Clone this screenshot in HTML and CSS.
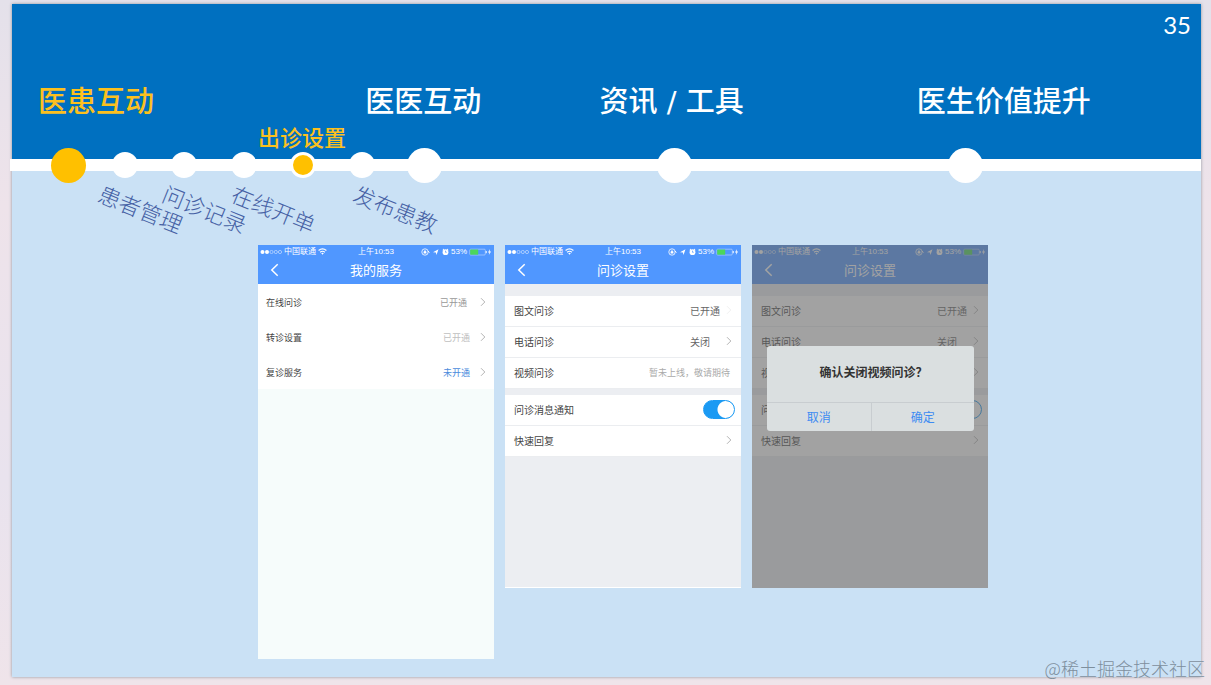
FILE: index.html
```html
<!DOCTYPE html>
<html lang="zh-CN">
<head>
<meta charset="utf-8">
<title>医患互动 - 出诊设置</title>
<link rel="stylesheet" href="styles.css">
</head>
<body>
<svg class="symbols" aria-hidden="true">
  <symbol id="signal" viewBox="0 0 22 6">
    <circle cx="2.5" cy="3" r="2" fill="currentColor"/><circle cx="7" cy="3" r="2" fill="currentColor"/>
    <g fill="none" stroke="currentColor" stroke-width=".6" opacity=".8"><circle cx="11.5" cy="3" r="1.6"/><circle cx="15.8" cy="3" r="1.6"/><circle cx="20" cy="3" r="1.6"/></g>
  </symbol>
  <symbol id="wifi" viewBox="0 0 9 7">
    <g fill="none" stroke="currentColor" stroke-width="1.2"><path d="M.6 2.5Q4.5-.7 8.4 2.5"/><path d="M2.1 4.2Q4.5 2.3 6.9 4.2"/></g><path d="M3.2 5.3Q4.5 4.4 5.8 5.3L4.5 6.7z" fill="currentColor"/>
  </symbol>
  <symbol id="indicators" viewBox="0 0 28 8">
    <circle cx="4" cy="4" r="3.2" fill="none" stroke="currentColor" stroke-width=".8"/><path d="M2.6 3.6h2.8v2H2.6zM3.2 3.5V2.4h1.6v1.1" fill="currentColor"/><path d="M7 3l1.4 1.6" stroke="currentColor"/>
    <path d="M12 4.3L17.5 1.3 15.5 7 14.9 4.6z" fill="currentColor"/>
    <circle cx="24.5" cy="4.2" r="2.9" fill="currentColor"/><path d="M21.7 2l1.3-1M27.3 2l-1.3-1" stroke="currentColor"/><path class="hand" d="M24.5 2.7v1.6h1.2" fill="none" stroke-width=".7"/>
  </symbol>
  <symbol id="battery" viewBox="0 0 23 8">
    <rect x=".8" y="1.2" width="15.5" height="5.8" rx="1" fill="none" stroke="currentColor" stroke-width=".5" opacity=".8"/><rect x="1.2" y="1.5" width="8" height="5.2" fill="#4cd65c"/><path d="M17.2 3v2.2" stroke="currentColor"/><path d="M21 1l-2 3.5h1.4L19.8 7l2.3-3.4h-1.5z" fill="currentColor"/>
  </symbol>
  <symbol id="back" viewBox="0 0 9 14"><path d="M7.7 1.3L1.8 7l5.9 5.7" fill="none" stroke="currentColor" stroke-width="1.5"/></symbol>
  <symbol id="chevron" viewBox="0 0 6 10"><path d="M1 1.2L4.8 5 1 8.8" fill="none" stroke="currentColor" stroke-width=".9"/></symbol>
</svg>

<main class="slide">
  <header class="banner">
    <p class="page-number">35</p>
    <nav class="sections">
      <a class="section current" href="#">医患互动</a>
      <a class="section" href="#">医医互动</a>
      <a class="section" href="#">资讯 / 工具</a>
      <a class="section" href="#">医生价值提升</a>
    </nav>
    <p class="step-current">出诊设置</p>
  </header>

  <div class="track">
    <span class="dot major done"></span>
    <span class="dot"></span>
    <span class="dot"></span>
    <span class="dot"></span>
    <span class="dot active"></span>
    <span class="dot"></span>
    <span class="dot major"></span>
    <span class="dot major"></span>
    <span class="dot major"></span>
  </div>
  <div class="steps">
    <span class="step">患者管理</span>
    <span class="step">问诊记录</span>
    <span class="step">在线开单</span>
    <span class="step">发布患教</span>
  </div>

  <div class="phones">
    <section class="phone services">
      <header class="phone-head">
        <div class="status">
          <span class="carrier"><svg class="i-signal"><use href="#signal"/></svg>中国联通<svg class="i-wifi"><use href="#wifi"/></svg></span>
          <span>上午10:53</span>
          <span class="power"><svg class="i-indicators"><use href="#indicators"/></svg>53%<svg class="i-battery"><use href="#battery"/></svg></span>
        </div>
        <div class="navbar">
          <button class="back" aria-label="返回"><svg><use href="#back"/></svg></button>
          <h2>我的服务</h2>
        </div>
      </header>
      <div class="group">
        <a class="row" href="#">在线问诊<span class="value">已开通</span><svg class="chevron"><use href="#chevron"/></svg></a>
        <a class="row" href="#">转诊设置<span class="value faint">已开通</span><svg class="chevron"><use href="#chevron"/></svg></a>
        <a class="row" href="#">复诊服务<span class="value link">未开通</span><svg class="chevron"><use href="#chevron"/></svg></a>
      </div>
    </section>

    <section class="phone settings">
      <header class="phone-head">
        <div class="status">
          <span class="carrier"><svg class="i-signal"><use href="#signal"/></svg>中国联通<svg class="i-wifi"><use href="#wifi"/></svg></span>
          <span>上午10:53</span>
          <span class="power"><svg class="i-indicators"><use href="#indicators"/></svg>53%<svg class="i-battery"><use href="#battery"/></svg></span>
        </div>
        <div class="navbar">
          <button class="back" aria-label="返回"><svg><use href="#back"/></svg></button>
          <h2>问诊设置</h2>
        </div>
      </header>
      <div class="group">
        <a class="row" href="#">图文问诊<span class="value dark">已开通</span><svg class="chevron pale"><use href="#chevron"/></svg></a>
        <a class="row" href="#">电话问诊<span class="value dark apart">关闭</span><svg class="chevron"><use href="#chevron"/></svg></a>
        <div class="row">视频问诊<span class="value note">暂未上线，敬请期待</span></div>
      </div>
      <div class="group">
        <label class="row" for="notify">问诊消息通知<input class="switch" id="notify" type="checkbox" checked></label>
        <a class="row" href="#">快速回复<svg class="chevron solo"><use href="#chevron"/></svg></a>
      </div>
    </section>

    <section class="phone settings dimmed">
      <header class="phone-head">
        <div class="status">
          <span class="carrier"><svg class="i-signal"><use href="#signal"/></svg>中国联通<svg class="i-wifi"><use href="#wifi"/></svg></span>
          <span>上午10:53</span>
          <span class="power"><svg class="i-indicators"><use href="#indicators"/></svg>53%<svg class="i-battery"><use href="#battery"/></svg></span>
        </div>
        <div class="navbar">
          <button class="back" aria-label="返回"><svg><use href="#back"/></svg></button>
          <h2>问诊设置</h2>
        </div>
      </header>
      <div class="group">
        <a class="row" href="#">图文问诊<span class="value dark">已开通</span><svg class="chevron"><use href="#chevron"/></svg></a>
        <a class="row" href="#">电话问诊<span class="value dark apart">关闭</span><svg class="chevron"><use href="#chevron"/></svg></a>
        <a class="row" href="#">视频问诊<svg class="chevron solo"><use href="#chevron"/></svg></a>
      </div>
      <div class="group">
        <label class="row" for="notify-2">问诊消息通知<input class="switch" id="notify-2" type="checkbox"></label>
        <a class="row" href="#">快速回复<svg class="chevron solo"><use href="#chevron"/></svg></a>
      </div>
      <div class="overlay">
        <div class="dialog" role="dialog" aria-labelledby="confirm-title">
          <h3 id="confirm-title">确认关闭视频问诊？</h3>
          <div class="actions">
            <button>取消</button>
            <button>确定</button>
          </div>
        </div>
      </div>
    </section>
  </div>
</main>
<p class="credit">@稀土掘金技术社区</p>
</body>
</html>
```
FILE: styles.css
```css
* { box-sizing: border-box; }

body {
  margin: 0;
  min-height: 100vh;
  padding: 4px 10px 8px 12px;
  background: linear-gradient(#e4e1ea, #eee3ea 30%, #e9e3ee 70%, #efe4ea);
  font-family: "Noto Sans CJK SC", "Noto Sans", sans-serif;
  display: flex;
  position: relative;
}

h2, h3, p { margin: 0; font-weight: 400; }
a { color: inherit; text-decoration: none; }
button { border: 0; background: none; padding: 0; font: inherit; color: inherit; }
svg { display: block; flex: none; }
.symbols { position: absolute; width: 0; height: 0; }

.slide {
  flex: 1;
  background: #cae1f5;
  box-shadow: 0 0 3px #8f949c;
}

.banner { background: #0070c0; color: #fff; }
.page-number {
  padding-right: 10px;
  text-align: right;
  font: 24px/42px Lato, sans-serif;
}
.sections {
  display: grid;
  grid-template-columns: 327fr 234fr 317fr 284fr;
  margin-top: 36px;
  padding-left: 26px;
  font-family: "DejaVu Sans", "Noto Sans CJK SC", sans-serif;
  font-size: 29px;
  line-height: 40px;
  font-weight: 500;
  white-space: nowrap;
}
.current, .step-current { color: #fcc01e; }
.step-current {
  padding: 0 0 9px 21%;
  padding-left: 20.7%;
  font-size: 22px;
  line-height: 28px;
  font-weight: 500;
}

.track {
  display: grid;
  grid-template-columns: 61fr 59fr 60fr 59fr 59fr 58fr 250fr 291fr 253fr;
  grid-template-rows: 12px;
  align-items: center;
  margin-left: -2px;
  padding-left: 41px;
  background: #fff;
}
.dot {
  width: 26px;
  height: 26px;
  border-radius: 50%;
  background: #fff;
}
.dot.major { width: 35px; height: 35px; }
.dot.done { background: #ffc000; }
.dot.active { background: #ffc000; border: 3px solid #fff; }

.steps {
  display: grid;
  grid-template-columns: minmax(0, 64fr) minmax(0, 69fr) minmax(0, 122fr) minmax(0, 849fr);
  padding: 20px 0 20px 85px;
  color: #4560a4;
  font-size: 22px;
  line-height: 34px;
  font-weight: 300;
  white-space: nowrap;
}
.step { justify-self: start; transform: rotate(22deg); }

.phones {
  display: flex;
  align-items: flex-start;
  gap: 11px;
  padding: 0 20px 18px 246px;
}
.phone {
  flex: 0 1 236px;
  min-width: 0;
  font-size: 10px;
  color: #444;
  position: relative;
}
.services { min-height: 414px; background: #f6fcfb; font-size: 9px; }
.settings { min-height: 343px; background: #eceef2; border-bottom: 1px solid #fff; }

.phone-head { background: #5097ff; color: #fff; }
.status {
  display: grid;
  grid-template-columns: 1fr auto 1fr;
  align-items: center;
  padding: 0 2px;
  font-family: "Liberation Sans", "Noto Sans CJK SC", sans-serif;
  font-size: 8px;
  line-height: 13px;
}
.carrier, .power { display: flex; align-items: center; gap: 2px; }
.power { justify-content: flex-end; }
.i-signal { width: 22px; height: 6px; }
.i-wifi { width: 9px; height: 7px; }
.i-indicators { width: 28px; height: 8px; }
.i-battery { width: 23px; height: 8px; }
.hand { stroke: #5097ff; }
.navbar {
  display: grid;
  grid-template-columns: 32px 1fr 32px;
  align-items: center;
  height: 26px;
  padding-bottom: 2px;
}
.back { justify-self: center; }
.back svg { width: 9px; height: 14px; }
.navbar h2 { text-align: center; font-size: 13px; line-height: 20px; }

.group { background: #fff; }
.row {
  display: flex;
  align-items: center;
  height: 31px;
  padding: 0 9px 2px 9px;
  border-bottom: 1px solid #ebedf0;
}
.services .row { height: 35px; border-bottom: 0; padding: 1px 8px 0; }
.settings .group { margin-top: 6px; }
.settings .phone-head + .group { margin-top: 12px; }

.value { margin-left: auto; margin-right: 13px; color: #999; }
.value.faint { color: #c0c0c0; margin-right: 10px; }
.value.link { color: #4a8bdc; margin-right: 10px; }
.value.dark { color: #666; margin-right: 6px; }
.value.apart { margin-right: 16px; }
.value.note { color: #aaa; font-size: 9px; margin-right: 2px; }
.chevron { width: 6px; height: 10px; color: #aaa; }
.chevron.pale { color: #eee; }
.chevron.solo { margin-left: auto; }

.switch {
  appearance: none;
  width: 32px;
  height: 19px;
  margin: 0 -3px 0 auto;
  border: 1px solid #1b9af3;
  border-radius: 10px;
  background: radial-gradient(circle at 22px 50%, #fff 8px, #1b9af3 9px);
}
.switch:not(:checked) { background: #fff; }

.dimmed { border-bottom: 0; }
.overlay {
  position: absolute;
  inset: 0;
  padding: 101px 14px 0 15px;
  background: rgba(100, 100, 100, .6);
}
.dialog {
  border-radius: 3px;
  background: #dadfe0;
  text-align: center;
  font-size: 12px;
}
.dialog h3 {
  padding: 16px 0 20px 6px;
  font-size: 12px;
  line-height: 20px;
  font-weight: 700;
  color: #333;
}
.actions {
  display: grid;
  grid-template-columns: 1fr 1fr;
  border-top: 1px solid #c8cdd0;
  line-height: 28px;
  color: #3d8bf2;
}
.actions button + button { border-left: 1px solid #c8cdd0; }

.credit {
  position: absolute;
  right: 6px;
  bottom: 4px;
  font-size: 18px;
  line-height: 26px;
  font-weight: 300;
  color: #7e8f9d;
}
```
